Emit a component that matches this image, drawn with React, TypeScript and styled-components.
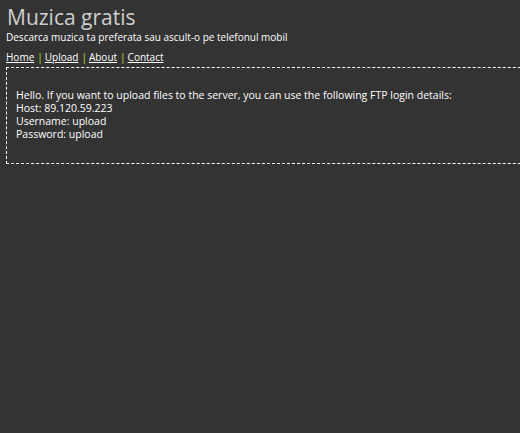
import React from 'react';
import styled, { createGlobalStyle } from 'styled-components';

const GlobalStyle = createGlobalStyle`
  html, body {
    margin: 0;
    padding: 0;
    background: #333333;
    overflow: hidden;
  }
  body {
    font-family: "Open Sans", "DejaVu Sans", sans-serif;
    color: #ffffff;
  }
`;

const Page = styled.div`
  padding: 4px 0 0 6px;
  min-height: 433px;
  box-sizing: border-box;
`;

const Title = styled.h1`
  margin: 0 0 0 1px;
  font-size: 21px;
  font-weight: normal;
  line-height: 26px;
  color: #cfcfcf;
`;

const Subtitle = styled.div`
  font-size: 10px;
  line-height: 14px;
  color: #ffffff;
`;

const Nav = styled.nav`
  margin-top: 6px;
  font-size: 10px;
  line-height: 14px;
`;

const NavLink = styled.a`
  color: #ffffff;
  text-decoration: underline;
`;

const Separator = styled.span`
  color: #8fa82a;
  font-weight: bold;
  margin: 0 2px 0 3px;
`;

const ContentBox = styled.div`
  margin-top: 3px;
  width: 540px;
  border: 1px dashed #ffffff;
  padding: 21px 9px 19px 9px;
  font-size: 10.5px;
  line-height: 13px;
  min-height: 55px;
`;

const Line = styled.div``;

const links = ['Home', 'Upload', 'About', 'Contact'];

export default function App() {
  return (
    <>
      <GlobalStyle />
      <Page>
        <Title>Muzica gratis</Title>
        <Subtitle>Descarca muzica ta preferata sau ascult-o pe telefonul mobil</Subtitle>
        <Nav>
          {links.map((l, i) => (
            <React.Fragment key={l}>
              {i > 0 && <Separator>|</Separator>}
              <NavLink href="#">{l}</NavLink>
            </React.Fragment>
          ))}
        </Nav>
        <ContentBox>
          <Line>Hello. If you want to upload files to the server, you can use the following FTP login details:</Line>
          <Line>Host: 89.120.59.223</Line>
          <Line>Username: upload</Line>
          <Line>Password: upload</Line>
        </ContentBox>
      </Page>
    </>
  );
}
